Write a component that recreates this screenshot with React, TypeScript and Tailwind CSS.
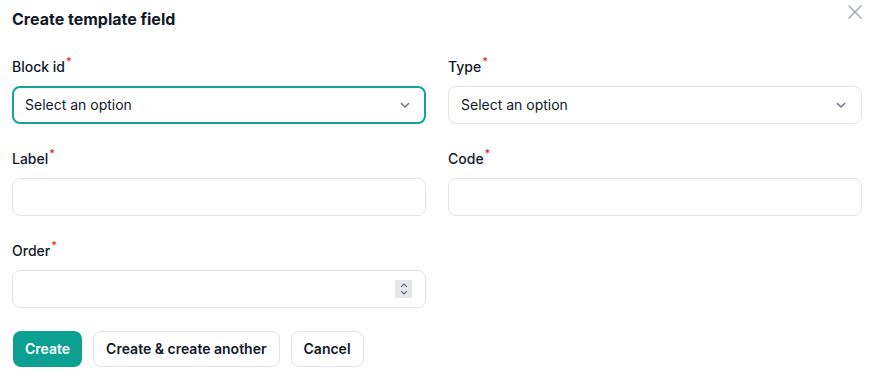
import React from "react";

function Chevron() {
  return (
    <svg width="16" height="16" viewBox="0 0 20 20" fill="none" stroke="#6b7280" strokeWidth="1.8" strokeLinecap="round" strokeLinejoin="round">
      <path d="M5.5 8l4.5 4.5L14.5 8" />
    </svg>
  );
}

function Label({ children }: { children: React.ReactNode }) {
  return (
    <div className="text-sm leading-5 font-medium text-[#111827] h-5 flex items-start">
      <span>{children}</span>
      <span className="text-[#dc2626] font-medium text-[11px] leading-none ml-[1px] mt-[-1px]">*</span>
    </div>
  );
}

function Select({ focused }: { focused?: boolean }) {
  return (
    <div
      className={
        "h-[38px] rounded-lg bg-white flex items-center justify-between " +
        (focused ? "border-2 border-[#14a394] pl-[11px] pr-[11px]" : "border border-[#e2e4e8] pl-3 pr-3")
      }
    >
      <span className="text-sm text-[#111827]">Select an option</span>
      <Chevron />
    </div>
  );
}

function Input({ number }: { number?: boolean }) {
  return (
    <div className="h-[38px] rounded-lg bg-white border border-[#e2e4e8] flex items-center justify-end pr-[13px]">
      {number && (
        <div className="w-[17px] h-[18px] bg-[#e5e7eb] flex flex-col items-center justify-center">
          <svg width="10" height="16" viewBox="0 0 10 16" fill="none" stroke="#6b7280" strokeWidth="1.2" strokeLinecap="round" strokeLinejoin="round">
            <path d="M2.5 5.5L5 3 7.5 5.5" />
            <path d="M2.5 10.5L5 13 7.5 10.5" />
          </svg>
        </div>
      )}
    </div>
  );
}

export default function App() {
  return (
    <div className="w-[870px] h-[381px] bg-white relative" style={{ fontFamily: "Inter, 'Noto Sans', sans-serif" }}>
      <button className="absolute right-[5px] top-[2px] w-[20px] h-[20px] flex items-center justify-center">
        <svg width="16" height="16" viewBox="0 0 16 16" fill="none" stroke="#9ca3af" strokeWidth="1.4" strokeLinecap="round">
          <path d="M2 2l12 12M14 2L2 14" />
        </svg>
      </button>
      <div className="pl-3 pt-[7px]">
        <h2 className="text-base leading-6 font-bold text-[#111827] h-6">Create template field</h2>
        <div className="grid grid-cols-[414px_414px] gap-x-[22px] gap-y-[25px] mt-[26px]">
          <div className="flex flex-col gap-[9px]">
            <Label>Block id</Label>
            <Select focused />
          </div>
          <div className="flex flex-col gap-[9px]">
            <Label>Type</Label>
            <Select />
          </div>
          <div className="flex flex-col gap-[9px]">
            <Label>Label</Label>
            <Input />
          </div>
          <div className="flex flex-col gap-[9px]">
            <Label>Code</Label>
            <Input />
          </div>
          <div className="flex flex-col gap-[9px]">
            <Label>Order</Label>
            <Input number />
          </div>
        </div>
        <div className="flex gap-[11px] mt-[23px] pl-px">
          <button className="h-[36px] px-3 rounded-lg bg-[#0d9f91] text-white text-sm font-semibold">Create</button>
          <button className="h-[36px] px-3 rounded-lg bg-white border border-[#e2e4e8] text-[#111827] text-sm font-semibold">Create &amp; create another</button>
          <button className="h-[36px] px-3 rounded-lg bg-white border border-[#e2e4e8] text-[#111827] text-sm font-semibold">Cancel</button>
        </div>
      </div>
    </div>
  );
}
